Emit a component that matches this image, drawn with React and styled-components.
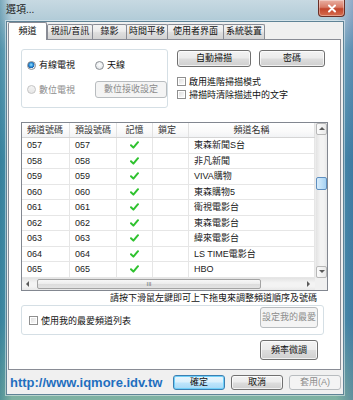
import React from 'react';
import styled, { createGlobalStyle, css } from 'styled-components';

const FONT = `"Liberation Sans", "Noto Sans CJK TC", sans-serif`;

const Global = createGlobalStyle`
  html, body { margin: 0; padding: 0; background: #fff; }
  body { width: 353px; height: 400px; overflow: hidden; font-family: ${FONT}; }
  * { box-sizing: border-box; }
`;

const Win = styled.div`
  width: 353px;
  height: 400px;
  display: flex;
  flex-direction: column;
  background:
    linear-gradient(90deg, rgba(30,110,140,.45) 0, rgba(255,255,255,0) 12px, rgba(255,255,255,0) 336px, rgba(40,80,150,.35) 353px),
    linear-gradient(180deg, #c7d9e2 0, #b4cdd9 18px, #78aec2 50px, #4a90aa 160px, #4e93ab 320px, #7fb2a2 400px);
`;

const TitleBar = styled.div`
  height: 21px;
  flex: none;
  display: flex;
  justify-content: space-between;
  align-items: flex-start;
  padding-left: 6px;
`;

const Title = styled.span`
  align-self: center;
  font-size: 10px;
  line-height: 12px;
  color: #1a1a1a;
  margin-top: -1px;
`;

const CloseBtn = styled.div`
  width: 27px;
  height: 17px;
  margin-right: 8px;
  border: 1px solid #6a2f26;
  border-top: none;
  border-radius: 0 0 4px 4px;
  background: linear-gradient(180deg, #eab0a3 0, #d87c68 45%, #c2452c 55%, #d66d4e 100%);
  display: flex;
  align-items: center;
  justify-content: center;
  box-shadow: inset 0 0 0 1px rgba(255,255,255,.35);
`;

const Client = styled.div`
  flex: 1;
  margin: 0 9px 5px 6px;
  border: 1px solid #5f8396;
  background: #f0f0f0;
  display: flex;
  flex-direction: column;
  padding: 2px 2px 0 1px;
  box-shadow: 0 0 0 1px rgba(255,255,255,.45);
`;

const TabRow = styled.div`
  height: 15px;
  display: flex;
  align-items: flex-end;
  flex: none;
`;

const Tab = styled.div`
  width: ${p => p.$w}px;
  height: 15px;
  border: 1px solid #898c95;
  border-bottom: none;
  border-radius: 2px 2px 0 0;
  background: linear-gradient(180deg, #f4f4f4 0, #ebebeb 45%, #dedede 55%, #d2d2d2 100%);
  font-size: 9px;
  line-height: 13px;
  text-align: center;
  color: #111;
  white-space: nowrap;
  margin-right: -1px;
  ${p => p.$active && css`
    height: 18px;
    margin-bottom: -1px;
    background: #fff;
    position: relative;
    z-index: 1;
    line-height: 17px;
    margin-right: 0;
  `}
`;

const Panel = styled.div`
  width: 333px;
  height: 331px;
  flex: none;
  border: 1px solid #898c95;
  background: #fff;
  padding: 9px 12px 0 12px;
  display: flex;
  flex-direction: column;
`;

const TopSection = styled.div`
  display: flex;
  height: 59px;
  flex: none;
`;

const GroupBox = styled.div`
  width: ${p => p.$w}px;
  height: ${p => p.$h}px;
  border: 1px solid #d5dfe5;
  border-radius: 3px;
  flex: none;
`;

const RadioGroup = styled(GroupBox)`
  padding: 8px 0 0 5px;
`;

const RadioRow = styled.div`
  display: grid;
  grid-template-columns: 68px auto;
  align-items: center;
  height: ${p => p.$h}px;
  margin-top: ${p => p.$mt || 0}px;
`;

const Opt = styled.label`
  display: flex;
  align-items: center;
  gap: 3px;
  font-size: 9px;
  line-height: 12px;
  color: ${p => (p.$disabled ? '#8d8d8d' : '#111')};
  white-space: nowrap;
`;

const RadioDot = styled.span`
  width: 9px;
  height: 9px;
  border-radius: 50%;
  flex: none;
  border: 1px solid ${p => (p.$disabled ? '#c4c4c4' : '#8b8f94')};
  background: ${p =>
    p.$checked
      ? 'radial-gradient(circle at 45% 40%, #9fe3ff 0, #2a8fd8 35%, #1c5fa8 55%, #eef3f6 62%, #dfe5ea 100%)'
      : p.$disabled
      ? 'linear-gradient(180deg,#f4f4f4,#e6e6e6)'
      : 'radial-gradient(circle at 50% 40%, #ffffff 0, #eef0f2 45%, #d2d6da 100%)'};
`;

const CheckBox = styled.span`
  width: 9px;
  height: 9px;
  flex: none;
  border: 1px solid #8f8f8f;
  background: linear-gradient(135deg, #d9d9d9 0, #f1f1f1 60%, #fdfdfd 100%);
  box-shadow: inset 0 0 0 1px #fff;
`;

const Button = styled.div`
  width: ${p => p.$w}px;
  height: ${p => p.$h}px;
  flex: none;
  display: flex;
  align-items: center;
  justify-content: center;
  font-size: 9px;
  line-height: 11px;
  white-space: nowrap;
  border-radius: 3px;
  border: 1px solid #707070;
  color: #111;
  background: linear-gradient(180deg, #f3f3f3 0, #ebebeb 48%, #dddddd 52%, #cfcfcf 100%);
  box-shadow: inset 0 0 0 1px rgba(255,255,255,.7);
  ${p => p.$disabled && css`
    border-color: #b8bcbf;
    color: #8c8c8c;
    background: #f4f4f4;
    box-shadow: none;
  `}
  ${p => p.$default && css`
    border-color: #3c7fb1;
    background: linear-gradient(180deg, #eaf6fd 0, #d9f0fc 48%, #bee6fd 52%, #a7d9f5 100%);
    box-shadow: inset 0 0 0 1px #6fd0fa;
  `}
`;

const RightCol = styled.div`
  margin-left: 9px;
  display: flex;
  flex-direction: column;
`;

const BtnRow = styled.div`
  display: flex;
  gap: 8px;
  margin-top: 1px;
`;

const CheckRow = styled.label`
  display: flex;
  align-items: center;
  gap: 3px;
  height: 13px;
  font-size: 9px;
  line-height: 12px;
  color: #111;
  white-space: nowrap;
  margin-top: ${p => p.$mt || 0}px;
`;

const TableBox = styled.div`
  margin-top: 14px;
  width: 307px;
  height: 169px;
  flex: none;
  border: 1px solid #828790;
  display: grid;
  grid-template-columns: 293px 12px;
  grid-template-rows: 154.5px 12.5px;
`;

const List = styled.div`
  overflow: hidden;
`;

const COLS = '48px 47px 36px 36px 126px';

const HeadRow = styled.div`
  display: grid;
  grid-template-columns: ${COLS};
  height: 15px;
  background: linear-gradient(180deg, #ffffff 0, #fafafa 60%, #f2f3f5 100%);
  border-bottom: 1px solid #d5d5d5;
`;

const HeadCell = styled.div`
  border-right: 1px solid #e2e2e2;
  font-size: 9px;
  line-height: 14px;
  color: #333;
  padding-left: 5px;
  text-align: ${p => p.$align || 'left'};
  ${p => p.$align === 'center' && css`padding-left: 0;`}
  white-space: nowrap;
`;

const Row = styled.div`
  display: grid;
  grid-template-columns: ${COLS};
  height: 15.5px;
  border-bottom: 1px solid #e6e6e6;
`;

const Cell = styled.div`
  border-right: 1px solid #e6e6e6;
  font-size: 9px;
  line-height: 14.5px;
  color: #222;
  padding-left: 5px;
  white-space: nowrap;
  display: flex;
  align-items: center;
  justify-content: ${p => (p.$center ? 'center' : 'flex-start')};
  ${p => p.$center && css`padding-left: 0;`}
`;

const VScroll = styled.div`
  background: linear-gradient(90deg, #e3e3e3 0, #f3f3f3 40%, #f3f3f3 70%, #e8e8e8 100%);
  display: flex;
  flex-direction: column;
  border-left: 1px solid #ececec;
`;

const HScroll = styled.div`
  background: linear-gradient(180deg, #e3e3e3 0, #f3f3f3 40%, #f3f3f3 70%, #e8e8e8 100%);
  display: flex;
  align-items: stretch;
`;

const ArrowBtn = styled.div`
  width: ${p => p.$w}px;
  height: ${p => p.$h}px;
  flex: none;
  display: flex;
  align-items: center;
  justify-content: center;
  ${p => p.$boxed && css`
    border: 1px solid #b7b7b7;
    border-radius: 2px;
    background: linear-gradient(90deg, #fbfbfb, #e9e9e9);
  `}
`;

const VThumb = styled.div`
  height: 13px;
  margin-top: 42px;
  border: 1px solid #5e8fc0;
  border-radius: 2px;
  background: linear-gradient(90deg, #d8ecfb 0, #bfe0f8 50%, #a6d2f3 100%);
  margin-left: 0;
  margin-right: 0;
`;

const HThumb = styled.div`
  width: 224px;
  margin: 1px 0 1px 3px;
  border: 1px solid #a3a3a3;
  border-radius: 2px;
  background: linear-gradient(180deg, #f7f7f7 0, #ececec 50%, #dcdcdc 51%, #e3e3e3 100%);
  display: flex;
  align-items: center;
  justify-content: center;
`;

const Grip = styled.span`
  font-size: 6px;
  line-height: 6px;
  letter-spacing: 0;
  color: #6a6a6a;
  font-family: "Liberation Sans", sans-serif;
`;

const Spacer = styled.div`
  flex: 1;
`;

const Corner = styled.div`
  background: #f0f0f0;
`;

const Hint = styled.div`
  height: 12px;
  margin-top: 1px;
  font-size: 9px;
  line-height: 12px;
  color: #111;
  text-align: right;
  padding-right: 11px;
  white-space: nowrap;
  flex: none;
`;

const FavGroup = styled(GroupBox)`
  margin-top: 1px;
  display: flex;
  justify-content: space-between;
  align-items: flex-start;
  padding: 1px 5px 0 7px;
`;

const FavCheck = styled(CheckRow)`
  align-self: center;
`;

const FineTune = styled(Button)`
  align-self: flex-end;
  margin-right: 10px;
  margin-top: 5px;
`;

const BottomBar = styled.div`
  flex: 1;
  display: flex;
  align-items: center;
  padding-left: 2px;
  gap: 6px;
`;

const Url = styled.span`
  font-family: "Liberation Sans", Arial, sans-serif;
  font-weight: bold;
  font-size: 13px;
  line-height: 15px;
  color: #1f6fbf;
  margin-right: auto;
  white-space: nowrap;
`;

const Check = () => (
  <svg width="9" height="8" viewBox="0 0 9 8">
    <path d="M1 4.2 L3.4 6.6 L8 1.2" fill="none" stroke="#2fc22f" strokeWidth="2" strokeLinecap="round" strokeLinejoin="round" />
  </svg>
);

const Tri = ({ dir }) => {
  const pts = {
    up: '1,5 4,2 7,5',
    down: '1,2 4,5 7,2',
    left: '5,1 2,4 5,7',
    right: '2,1 5,4 2,7',
  }[dir];
  return (
    <svg width="8" height="8" viewBox="0 0 8 8">
      <polygon points={pts} fill="#5a5a5a" />
    </svg>
  );
};

const tabs = [
  { t: '頻道', w: 39, active: true },
  { t: '視訊/音訊', w: 46 },
  { t: '錄影', w: 35 },
  { t: '時間平移', w: 42 },
  { t: '使用者界面', w: 57 },
  { t: '系統裝置', w: 42 },
];

const rows = [
  ['057', '東森新聞S台'],
  ['058', '非凡新聞'],
  ['059', 'VIVA購物'],
  ['060', '東森購物5'],
  ['061', '衛視電影台'],
  ['062', '東森電影台'],
  ['063', '緯來電影台'],
  ['064', 'LS TIME電影台'],
  ['065', 'HBO'],
];

export default function App() {
  return (
    <>
      <Global />
      <Win>
        <TitleBar>
          <Title>選項...</Title>
          <CloseBtn>
            <svg width="10" height="9" viewBox="0 0 10 9">
              <path d="M2 1.5 L8 7.5 M8 1.5 L2 7.5" stroke="#fff" strokeWidth="2" strokeLinecap="round" />
            </svg>
          </CloseBtn>
        </TitleBar>
        <Client>
          <TabRow>
            {tabs.map(tb => (
              <Tab key={tb.t} $w={tb.w} $active={tb.active}>{tb.t}</Tab>
            ))}
          </TabRow>
          <Panel>
            <TopSection>
              <RadioGroup $w={147} $h={59}>
                <RadioRow $h={14}>
                  <Opt><RadioDot $checked />有線電視</Opt>
                  <Opt><RadioDot />天線</Opt>
                </RadioRow>
                <RadioRow $h={17} $mt={9}>
                  <Opt $disabled><RadioDot $disabled />數位電視</Opt>
                  <Button $w={72} $h={17} $disabled>數位接收設定</Button>
                </RadioRow>
              </RadioGroup>
              <RightCol>
                <BtnRow>
                  <Button $w={74} $h={17}>自動掃描</Button>
                  <Button $w={66} $h={17}>密碼</Button>
                </BtnRow>
                <CheckRow $mt={8}><CheckBox />啟用進階掃描模式</CheckRow>
                <CheckRow><CheckBox />掃描時清除描述中的文字</CheckRow>
              </RightCol>
            </TopSection>

            <TableBox>
              <List>
                <HeadRow>
                  <HeadCell>頻道號碼</HeadCell>
                  <HeadCell>預設號碼</HeadCell>
                  <HeadCell $align="center">記憶</HeadCell>
                  <HeadCell>鎖定</HeadCell>
                  <HeadCell $align="center">頻道名稱</HeadCell>
                </HeadRow>
                {rows.map(([n, name]) => (
                  <Row key={n}>
                    <Cell>{n}</Cell>
                    <Cell>{n}</Cell>
                    <Cell $center><Check /></Cell>
                    <Cell />
                    <Cell>{name}</Cell>
                  </Row>
                ))}
              </List>
              <VScroll>
                <ArrowBtn $w={11} $h={12} $boxed><Tri dir="up" /></ArrowBtn>
                <VThumb />
                <Spacer />
                <ArrowBtn $w={11} $h={12} $boxed><Tri dir="down" /></ArrowBtn>
              </VScroll>
              <HScroll>
                <ArrowBtn $w={12} $h={12}><Tri dir="left" /></ArrowBtn>
                <HThumb><Grip>III</Grip></HThumb>
                <Spacer />
                <ArrowBtn $w={12} $h={12}><Tri dir="right" /></ArrowBtn>
              </HScroll>
              <Corner />
            </TableBox>

            <Hint>請按下滑鼠左鍵即可上下拖曳來調整頻道順序及號碼</Hint>

            <FavGroup $w={303} $h={30}>
              <FavCheck><CheckBox />使用我的最愛頻道列表</FavCheck>
              <Button $w={58} $h={21} $disabled>設定我的最愛</Button>
            </FavGroup>

            <FineTune $w={58} $h={20}>頻率微調</FineTune>
          </Panel>
          <BottomBar>
            <Url>http://www.iqmore.idv.tw</Url>
            <Button $w={52} $h={15} $default>確定</Button>
            <Button $w={52} $h={15}>取消</Button>
            <Button $w={52} $h={15} $disabled>套用(A)</Button>
          </BottomBar>
        </Client>
      </Win>
    </>
  );
}
